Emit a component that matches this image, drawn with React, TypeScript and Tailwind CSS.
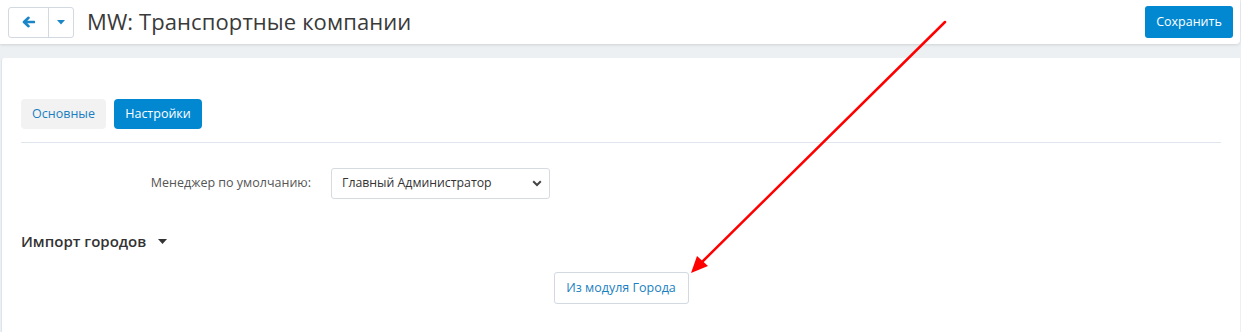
const font = { fontFamily: '"Open Sans", "Noto Sans", sans-serif' };

const App = () => {
  return (
    <div
      className="relative w-[1241px] h-[332px] overflow-hidden bg-[#edf0f3] text-[#333]"
      style={font}
    >
      <div className="h-[44px] bg-white mr-[1px] rounded-br-[4px] shadow-[0_1px_3px_rgba(0,0,0,0.12)] flex items-center justify-between pl-[8px] pr-[7px]">
        <div className="flex items-center">
          <div className="flex h-[31px] border border-[#d3d9e0] rounded-[3px]">
            <button className="w-[40px] flex items-center justify-center border-r border-[#d3d9e0]">
              <svg width="13" height="12" viewBox="0 0 13 12">
                <path d="M12 6H3M6.5 1.8L2 6l4.5 4.2" fill="none" stroke="#1a86c8" strokeWidth="2.6" strokeLinecap="round" strokeLinejoin="round" />
              </svg>
            </button>
            <button className="w-[24px] flex items-center justify-center">
              <svg width="8" height="5" viewBox="0 0 8 5">
                <path d="M0 0h8L4 4.5z" fill="#1a86c8" />
              </svg>
            </button>
          </div>
          <h1 className="ml-[13px] text-[22px] leading-none text-[#3a3a3a] pb-[2px] tracking-[0.1px]">MW: Транспортные компании</h1>
        </div>
        <button className="h-[32px] w-[88px] bg-[#0288d1] rounded-[3px] text-white text-[12.5px]">Сохранить</button>
      </div>

      <div className="mt-[14px] ml-[1px] mr-[1px] h-[300px] bg-white border-l border-[#dfe4ea] rounded-tl-[3px] px-[19px] pt-[41px]">
        <div className="flex gap-[8px] pb-[13px] border-b border-[#dfe6ee]">
          <button className="h-[30px] w-[85px] rounded-[4px] bg-[#f2f2f2] text-[12.5px] text-[#1a7fc1]">Основные</button>
          <button className="h-[30px] w-[88px] rounded-[4px] bg-[#0288d1] text-[12.5px] text-white">Настройки</button>
        </div>

        <div className="flex items-center mt-[25px]">
          <label className="w-[290px] text-right text-[12.5px] text-[#555]">Менеджер по умолчанию:</label>
          <div className="ml-[20px] w-[219px] h-[31px] border border-[#d6dbe1] rounded-[3px] flex items-center justify-between pl-[10px] pr-[7px]">
            <span className="text-[12.3px] text-[#333]">Главный Администратор</span>
            <svg width="10" height="7" viewBox="0 0 10 7">
              <path d="M1.2 1.3L5 5l3.8-3.7" fill="none" stroke="#444" strokeWidth="2" />
            </svg>
          </div>
        </div>

        <div className="flex items-center mt-[32px] h-[20px]">
          <span className="text-[15px] font-semibold text-[#333]">Импорт городов</span>
          <svg className="ml-[12px]" width="9" height="5" viewBox="0 0 9 5">
            <path d="M0 0h9L4.5 5z" fill="#333" />
          </svg>
        </div>

        <div className="flex justify-center mt-[21px]">
          <button className="h-[32px] w-[135px] border border-[#d3d9e0] rounded-[3px] text-[12.5px] text-[#1a7fc1] bg-white">Из модуля Города</button>
        </div>
      </div>

      <svg className="absolute inset-0 pointer-events-none" width="1241" height="332">
        <line x1="945" y1="22" x2="700" y2="264" stroke="#ff0000" strokeWidth="2.5" strokeLinecap="round" />
        <path d="M691 273L697 256L708 266z" fill="#ff0000" />
      </svg>
    </div>
  );
};

export default App;
